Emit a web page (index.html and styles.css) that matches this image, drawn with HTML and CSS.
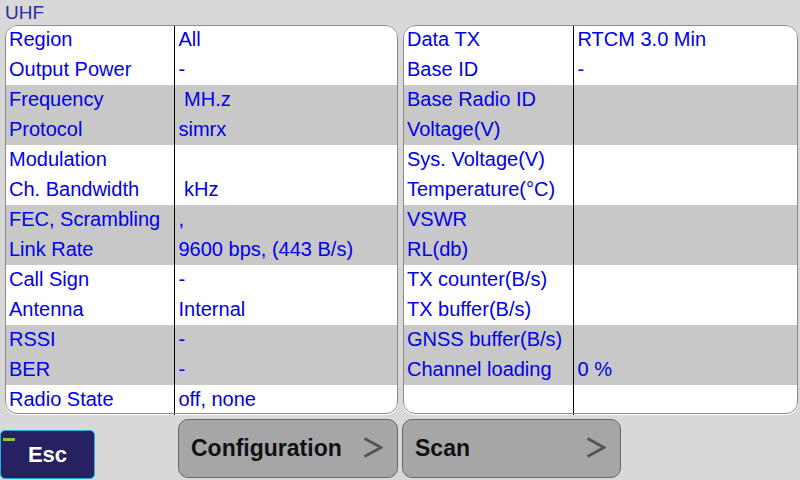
FILE: index.html
```html
<!DOCTYPE html>
<html>
<head>
<meta charset="utf-8">
<link rel="stylesheet" href="styles.css">
</head>
<body>
<div class="screen">
  <div class="title">UHF</div>
  <div class="panels">
    <div class="panel left">
      <div class="row"><div class="lbl">Region</div><div class="val">All</div></div>
      <div class="row"><div class="lbl">Output Power</div><div class="val">-</div></div>
      <div class="row alt"><div class="lbl">Frequency</div><div class="val">&nbsp;MH.z</div></div>
      <div class="row alt"><div class="lbl">Protocol</div><div class="val">simrx</div></div>
      <div class="row"><div class="lbl">Modulation</div><div class="val"></div></div>
      <div class="row"><div class="lbl">Ch. Bandwidth</div><div class="val">&nbsp;kHz</div></div>
      <div class="row alt"><div class="lbl">FEC, Scrambling</div><div class="val">,</div></div>
      <div class="row alt"><div class="lbl">Link Rate</div><div class="val">9600 bps, (443 B/s)</div></div>
      <div class="row"><div class="lbl">Call Sign</div><div class="val">-</div></div>
      <div class="row"><div class="lbl">Antenna</div><div class="val">Internal</div></div>
      <div class="row alt"><div class="lbl">RSSI</div><div class="val">-</div></div>
      <div class="row alt"><div class="lbl">BER</div><div class="val">-</div></div>
      <div class="row"><div class="lbl">Radio State</div><div class="val">off, none</div></div>
    </div>
    <div class="panel right">
      <div class="row"><div class="lbl">Data TX</div><div class="val">RTCM 3.0 Min</div></div>
      <div class="row"><div class="lbl">Base ID</div><div class="val">-</div></div>
      <div class="row alt"><div class="lbl">Base Radio ID</div><div class="val"></div></div>
      <div class="row alt"><div class="lbl">Voltage(V)</div><div class="val"></div></div>
      <div class="row"><div class="lbl">Sys. Voltage(V)</div><div class="val"></div></div>
      <div class="row"><div class="lbl">Temperature(°C)</div><div class="val"></div></div>
      <div class="row alt"><div class="lbl">VSWR</div><div class="val"></div></div>
      <div class="row alt"><div class="lbl">RL(db)</div><div class="val"></div></div>
      <div class="row"><div class="lbl">TX counter(B/s)</div><div class="val"></div></div>
      <div class="row"><div class="lbl">TX buffer(B/s)</div><div class="val"></div></div>
      <div class="row alt"><div class="lbl">GNSS buffer(B/s)</div><div class="val"></div></div>
      <div class="row alt"><div class="lbl">Channel loading</div><div class="val">0 %</div></div>
      <div class="row"><div class="lbl"></div><div class="val"></div></div>
    </div>
  </div>
  <div class="buttons">
    <div class="esc"><span class="mark"></span>Esc</div>
    <div class="btn config"><span>Configuration</span><svg class="arrow" width="20" height="22" viewBox="0 0 20 22"><polyline points="1.5,1.5 18,10.5 1.5,19.5" fill="none" stroke="#555" stroke-width="3"/></svg></div>
    <div class="btn scan"><span>Scan</span><svg class="arrow" width="20" height="22" viewBox="0 0 20 22"><polyline points="1.5,1.5 18,10.5 1.5,19.5" fill="none" stroke="#555" stroke-width="3"/></svg></div>
  </div>
</div>
</body>
</html>
```
FILE: styles.css
```css
html, body {
  margin: 0;
  padding: 0;
}
body {
  background: #d8d8d8;
  font-family: "Liberation Sans", Arial, sans-serif;
}
.screen {
  width: 800px;
  height: 480px;
  overflow: hidden;
  display: flex;
  flex-direction: column;
}
.title {
  height: 25px;
  line-height: 26px;
  padding-left: 5px;
  font-size: 19px;
  color: #2b2f9c;
}
.panels {
  display: flex;
  gap: 5px;
  padding-left: 5px;
}
.panel {
  position: relative;
  background: #fff;
  border-radius: 12px;
  overflow: hidden;
  display: flex;
  flex-direction: column;
}
.panel::after {
  content: "";
  position: absolute;
  left: 0;
  top: 0;
  right: 0;
  bottom: 1px;
  border: 1px solid #8a8a8a;
  border-radius: 12px;
  pointer-events: none;
}
.panel.left { width: 393px; }
.panel.right { width: 395px; }
.row {
  display: grid;
  grid-template-columns: 169px 1fr;
  box-sizing: border-box;
  height: 30px;
  padding-bottom: 2px;
  font-size: 20px;
  line-height: 28px;
  color: #0000ee;
}
.panel.right .row { grid-template-columns: 170px 1fr; }
.row.alt { background: #c8c8c8; }
.lbl {
  padding-left: 4px;
  white-space: nowrap;
}
.val {
  border-left: 1.5px solid #000;
  margin-bottom: -2px;
  padding-left: 3.5px;
  white-space: nowrap;
}
.buttons {
  display: flex;
  align-items: flex-start;
  margin-top: 4px;
}
.esc {
  position: relative;
  box-sizing: border-box;
  width: 95px;
  height: 49px;
  margin-top: 11px;
  background: #262262;
  border: 1px solid #29abe2;
  border-radius: 5px;
  color: #fff;
  font-weight: bold;
  font-size: 22px;
  display: flex;
  align-items: center;
  justify-content: center;
}
.mark {
  position: absolute;
  left: 2px;
  top: 7px;
  width: 12px;
  height: 3px;
  background: #8dc63f;
}
.btn {
  box-sizing: border-box;
  height: 59px;
  background: #a6a6a9;
  border: 1px solid #666;
  border-radius: 10px;
  display: flex;
  align-items: center;
  justify-content: space-between;
  padding: 0 14px 0 12px;
  font-weight: bold;
  font-size: 23px;
  color: #111;
}
.btn span { padding-bottom: 1px; }
.config {
  width: 220px;
  margin-left: 83px;
}
.scan {
  width: 219px;
  margin-left: 4px;
}
.arrow { display: block; margin-bottom: 2px; }
```
